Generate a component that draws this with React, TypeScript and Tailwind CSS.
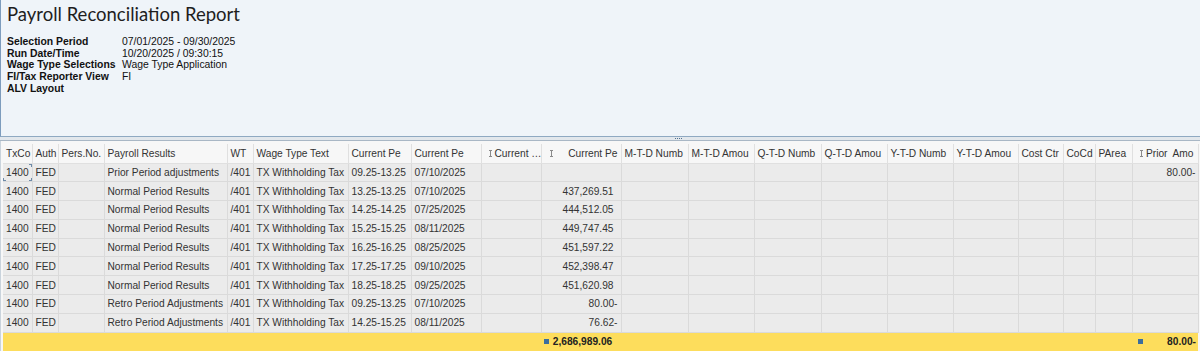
import React from "react";

type Row = {
  tx: string;
  auth: string;
  pr: string;
  wt: string;
  wtt: string;
  cp1: string;
  cp2: string;
  amt: string;
  prior: string;
};

const rows: Row[] = [
  { tx: "1400", auth: "FED", pr: "Prior Period adjustments", wt: "/401", wtt: "TX Withholding Tax", cp1: "09.25-13.25", cp2: "07/10/2025", amt: "", prior: "80.00-" },
  { tx: "1400", auth: "FED", pr: "Normal Period Results", wt: "/401", wtt: "TX Withholding Tax", cp1: "13.25-13.25", cp2: "07/10/2025", amt: "437,269.51", prior: "" },
  { tx: "1400", auth: "FED", pr: "Normal Period Results", wt: "/401", wtt: "TX Withholding Tax", cp1: "14.25-14.25", cp2: "07/25/2025", amt: "444,512.05", prior: "" },
  { tx: "1400", auth: "FED", pr: "Normal Period Results", wt: "/401", wtt: "TX Withholding Tax", cp1: "15.25-15.25", cp2: "08/11/2025", amt: "449,747.45", prior: "" },
  { tx: "1400", auth: "FED", pr: "Normal Period Results", wt: "/401", wtt: "TX Withholding Tax", cp1: "16.25-16.25", cp2: "08/25/2025", amt: "451,597.22", prior: "" },
  { tx: "1400", auth: "FED", pr: "Normal Period Results", wt: "/401", wtt: "TX Withholding Tax", cp1: "17.25-17.25", cp2: "09/10/2025", amt: "452,398.47", prior: "" },
  { tx: "1400", auth: "FED", pr: "Normal Period Results", wt: "/401", wtt: "TX Withholding Tax", cp1: "18.25-18.25", cp2: "09/25/2025", amt: "451,620.98", prior: "" },
  { tx: "1400", auth: "FED", pr: "Retro Period Adjustments", wt: "/401", wtt: "TX Withholding Tax", cp1: "09.25-13.25", cp2: "07/10/2025", amt: "80.00-", prior: "" },
  { tx: "1400", auth: "FED", pr: "Retro Period Adjustments", wt: "/401", wtt: "TX Withholding Tax", cp1: "14.25-15.25", cp2: "08/11/2025", amt: "76.62-", prior: "" },
];

const widthClasses = [
  "w-[29px]", "w-[26px]", "w-[46px]", "w-[123px]", "w-[26px]", "w-[95px]", "w-[63px]", "w-[70px]", "w-[60px]", "w-[80px]",
  "w-[67px]", "w-[66px]", "w-[67px]", "w-[66px]", "w-[66px]", "w-[65px]", "w-[45px]", "w-[32px]", "w-[37px]", "w-[66px]",
];

function SortIcon() {
  return (
    <svg width="5" height="7" viewBox="0 0 5 7" className="inline-block shrink-0">
      <path d="M1 0.5H4M2.5 0.5V6.5M1 6.5H4" stroke="#8a8a8a" strokeWidth="1" fill="none" />
    </svg>
  );
}

function Square() {
  return <span className="inline-block w-[5px] h-[5px] bg-[#3b6e9e]" />;
}

const th = "border-r border-b border-[#e0e0e0] px-[3px] font-normal text-left whitespace-nowrap overflow-hidden";
const td = "border-r border-b border-[#dadada] px-[3px] whitespace-nowrap overflow-hidden";

function amtCell(v: string) {
  const neg = v.endsWith("-");
  return <span className={neg ? "" : "pr-[4px]"}>{v}</span>;
}

export default function App() {
  return (
    <div className="w-[1200px] h-[351px] overflow-hidden bg-white flex flex-col font-['Liberation_Sans',Arial,sans-serif] text-[#333]">
      {/* Header panel */}
      <div className="h-[137px] shrink-0 bg-[#eff4f9] border-l border-[#7d9cbd] border-b border-b-[#8fa9c2] pl-[6px] pt-[3px]">
        <div className="font-['Lato',sans-serif] text-[18.5px] leading-[22px] text-[#1e1e1e]">Payroll Reconciliation Report</div>
        <div className="mt-[11px] grid grid-cols-[115px_1fr] font-['Liberation_Sans',Arial,sans-serif] text-[10.4px] leading-[11.7px] text-[#111] whitespace-nowrap">
          <div className="font-bold">Selection Period</div>
          <div>07/01/2025 - 09/30/2025</div>
          <div className="font-bold">Run Date/Time</div>
          <div>10/20/2025 / 09:30:15</div>
          <div className="font-bold">Wage Type Selections</div>
          <div>Wage Type Application</div>
          <div className="font-bold">FI/Tax Reporter View</div>
          <div>FI</div>
          <div className="font-bold">ALV Layout</div>
          <div></div>
        </div>
      </div>
      {/* Splitter */}
      <div className="h-[4px] shrink-0 bg-[#e2e7ec] border-b border-[#a9b7c5] flex justify-center items-center">
        <div className="flex gap-[1px] ml-[156px]">
          <span className="w-[1px] h-[1px] bg-[#4f6f8f]" />
          <span className="w-[1px] h-[1px] bg-[#4f6f8f]" />
          <span className="w-[1px] h-[1px] bg-[#4f6f8f]" />
          <span className="w-[1px] h-[1px] bg-[#4f6f8f]" />
        </div>
      </div>
      {/* Table area */}
      <div className="flex-1 bg-[#f7f7f7] pt-[3px] pl-[2px] border-l border-[#c9d3dc]">
        <table className="table-fixed border-collapse text-[10.2px] w-[1195px]">
          <colgroup>
            {widthClasses.map((c, i) => (
              <col key={i} className={c} />
            ))}
          </colgroup>
          <thead>
            <tr className="h-[19px] bg-[#f7f7f7] text-[#333]">
              <th className={th}>TxCo</th>
              <th className={th}>Auth</th>
              <th className={th}>Pers.No.</th>
              <th className={th}>Payroll Results</th>
              <th className={th}>WT</th>
              <th className={th}>Wage Type Text</th>
              <th className={th}>Current Pe</th>
              <th className={th}>Current Pe</th>
              <th className={th}>
                <div className="flex items-center gap-[2px] pl-[3px]">
                  <SortIcon />
                  <span>Current …</span>
                </div>
              </th>
              <th className={th}>
                <div className="flex items-center justify-between pl-[4px]">
                  <SortIcon />
                  <span>Current Pe</span>
                </div>
              </th>
              <th className={th}>M-T-D Numb</th>
              <th className={th}>M-T-D Amou</th>
              <th className={th}>Q-T-D Numb</th>
              <th className={th}>Q-T-D Amou</th>
              <th className={th}>Y-T-D Numb</th>
              <th className={th}>Y-T-D Amou</th>
              <th className={th}>Cost Ctr</th>
              <th className={th}>CoCd</th>
              <th className={th}>PArea</th>
              <th className={th}>
                <div className="flex items-center justify-between pl-[3px] pr-[1px]">
                  <SortIcon />
                  <span className="whitespace-pre">Prior  Amo</span>
                </div>
              </th>
            </tr>
          </thead>
          <tbody>
            {rows.map((r, i) => (
              <tr key={i} className="h-[18.8px] bg-[#ebebeb] text-[#333]">
                <td className={td + " relative"}>
                  {r.tx}
                  {i === 0 && (
                    <>
                      <span className="absolute right-0 top-0 w-[3px] h-[3px] border-t border-r border-[#6d8aa8]" />
                      <span className="absolute left-0 bottom-0 w-[3px] h-[3px] border-b border-l border-[#6d8aa8]" />
                      <span className="absolute right-0 bottom-0 w-[3px] h-[3px] border-b border-r border-[#6d8aa8]" />
                    </>
                  )}
                </td>
                <td className={td}>{r.auth}</td>
                <td className={td}></td>
                <td className={td}>{r.pr}</td>
                <td className={td}>{r.wt}</td>
                <td className={td}>{r.wtt}</td>
                <td className={td}>{r.cp1}</td>
                <td className={td}>{r.cp2}</td>
                <td className={td}></td>
                <td className={td + " text-right"}>{r.amt && amtCell(r.amt)}</td>
                <td className={td}></td>
                <td className={td}></td>
                <td className={td}></td>
                <td className={td}></td>
                <td className={td}></td>
                <td className={td}></td>
                <td className={td}></td>
                <td className={td}></td>
                <td className={td}></td>
                <td className={td + " text-right pr-[2px]"}>{r.prior && amtCell(r.prior)}</td>
              </tr>
            ))}
            <tr className="h-[19px] bg-[#fddd5c] font-bold text-[#222]">
              <td colSpan={9} className="border-b border-[#e5c54a]"></td>
              <td className="border-b border-[#e5c54a] px-[3px]">
                <div className="flex items-center justify-between">
                  <Square />
                  <span>2,686,989.06</span>
                  <span className="w-[2px]" />
                </div>
              </td>
              <td colSpan={9} className="border-b border-[#e5c54a]"></td>
              <td className="border-b border-[#e5c54a] pl-[6px] pr-[2px]">
                <div className="flex items-center justify-between">
                  <Square />
                  <span>80.00-</span>
                </div>
              </td>
            </tr>
          </tbody>
        </table>
      </div>
    </div>
  );
}
